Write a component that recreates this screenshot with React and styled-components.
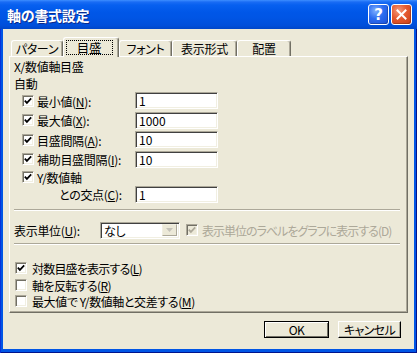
import React from 'react';
import styled, { createGlobalStyle } from 'styled-components';

const FONT = `"Noto Sans CJK JP", "Noto Sans", sans-serif`;

const GlobalStyle = createGlobalStyle`
  html, body { margin: 0; padding: 0; background: #ffffff; }
  body {
    font-family: ${FONT};
    font-size: 12px;
    color: #000;
    font-feature-settings: "palt";
    letter-spacing: -0.3px;
  }
  * { box-sizing: border-box; }
`;

const Window = styled.div`
  width: 417px;
  height: 353px;
  display: flex;
  flex-direction: column;
  background: #0055e5;
`;

const TitleBar = styled.div`
  height: 29px;
  flex: none;
  display: flex;
  align-items: center;
  padding: 0 5px 0 7px;
  background: linear-gradient(#3d8eff 0px, #1a6cf4 2px, #0760f0 5px, #0057e8 12px, #0055e5 60%, #004fda 88%, #0046c8 100%);
`;

const Title = styled.div`
  flex: 1;
  color: #fff;
  font-family: ${FONT};
  font-weight: bold;
  font-size: 14px;
  font-feature-settings: normal;
  letter-spacing: -0.3px;
  text-shadow: 1px 1px #0a2a8c;
  padding-top: 1px;
`;

const CaptionButtons = styled.div`
  display: flex;
  gap: 2px;
`;

const CaptionButton = styled.div`
  width: 21px;
  height: 21px;
  border: 1px solid #fff;
  border-radius: 3px;
  display: flex;
  align-items: center;
  justify-content: center;
  color: #fff;
  font-family: "DejaVu Sans", sans-serif;
  font-weight: bold;
  font-size: 15px;
  letter-spacing: 0;
  background: ${p => p.close
    ? 'radial-gradient(circle at 35% 30%, #f59a7c 0%, #e4592f 45%, #c73f17 100%)'
    : 'radial-gradient(circle at 35% 30%, #7fb0ff 0%, #2c6cf0 45%, #1a4fd6 100%)'};
  box-shadow: inset -1px -1px rgba(0,0,0,0.2);
`;

const Frame = styled.div`
  flex: 1;
  display: flex;
  padding: 0 3px 4px 3px;
  background: #0055e5;
  box-shadow: inset 1px 0 #0831d9, inset -1px 0 #00138c, inset 0 -1px #00138c;
`;

const Client = styled.div`
  flex: 1;
  background: #ece9d8;
  display: flex;
  flex-direction: column;
`;

const TabRow = styled.div`
  display: flex;
  align-items: flex-end;
  height: 19px;
  margin: 8px 0 0 8px;
`;

const Tab = styled.div`
  flex: none;
  width: ${p => p.w}px;
  height: ${p => (p.active ? 20 : 16)}px;
  margin-bottom: ${p => (p.active ? -1 : 0)}px;
  border-top: 1px solid #fff;
  border-left: 1px solid #fff;
  border-right: 1px solid #716f64;
  border-radius: 3px 3px 0 0;
  box-shadow: inset -1px 0 #aca899;
  background: #ece9d8;
  display: flex;
  align-items: center;
  justify-content: center;
  position: relative;
  z-index: ${p => (p.active ? 2 : 1)};
  font-size: 12px;
  line-height: 14px;
  padding-top: 1px;
`;

const FocusRing = styled.span`
  border: 1px dotted #000;
  width: 47px;
  height: 15px;
  display: flex;
  align-items: center;
  justify-content: center;
  margin-left: -4px;
  margin-top: -1px;
  font-size: 12.5px;
`;

const Panel = styled.div`
  width: 399px;
  height: 257px;
  margin-left: 6px;
  border-top: 1px solid #fff;
  border-left: 1px solid #fff;
  border-right: 1px solid #716f64;
  border-bottom: 1px solid #716f64;
  box-shadow: inset -1px -1px #aca899;
  display: flex;
  flex-direction: column;
`;

const Heading = styled.div`
  margin: 3px 0 0 4px;
  line-height: 14px;
  height: 14px;
`;

const SubHeading = styled.div`
  margin: 3px 0 0 4px;
  line-height: 14px;
  height: 14px;
`;

const Fields = styled.div`
  display: flex;
  flex-direction: column;
  padding-left: 12px;
`;

const FieldRow = styled.div`
  display: flex;
  align-items: center;
  height: ${p => p.h}px;
`;

const Label = styled.span`
  display: inline-block;
  flex: none;
  width: ${p => (p.w ? `${p.w}px` : 'auto')};
  margin-left: ${p => p.ml ?? 3}px;
  padding-top: 2px;
  line-height: 14px;
  white-space: nowrap;
  letter-spacing: ${p => (p.tight ? p.tight : -0.3)}px;
  color: ${p => (p.disabled ? '#aca899' : '#000')};
`;

const Box = styled.span`
  width: 12px;
  height: 12px;
  flex: none;
  display: inline-flex;
  align-items: center;
  justify-content: center;
  border-top: 1px solid #aca899;
  border-left: 1px solid #aca899;
  border-right: 1px solid #fff;
  border-bottom: 1px solid #fff;
  box-shadow: inset 1px 1px #716f64, inset -1px -1px #f1efe2;
  background: ${p => (p.disabled ? '#ece9d8' : '#fff')};
  margin-left: ${p => p.ml ?? 0}px;
`;

const TextField = styled.div`
  flex: none;
  width: 83px;
  height: 17px;
  border-top: 1px solid #aca899;
  border-left: 1px solid #aca899;
  border-right: 1px solid #fff;
  border-bottom: 1px solid #fff;
  box-shadow: inset 1px 1px #404040, inset -1px -1px #f1efe2;
  background: #fff;
  padding: 1px 0 0 3px;
  line-height: 14px;
  font-size: 12px;
  letter-spacing: 0;
`;

const Separator = styled.div`
  height: 2px;
  margin: ${p => p.mt}px 7px 0 4px;
  border-top: 1px solid #aca899;
  border-bottom: 1px solid #fff;
`;

const UnitRow = styled.div`
  display: flex;
  align-items: center;
  height: 18px;
  margin: 10px 0 0 4px;
`;

const Select = styled.div`
  flex: none;
  width: 80px;
  height: 17px;
  display: flex;
  align-items: center;
  border-top: 1px solid #aca899;
  border-left: 1px solid #aca899;
  border-right: 1px solid #fff;
  border-bottom: 1px solid #fff;
  box-shadow: inset 1px 1px #404040, inset -1px -1px #f1efe2;
  background: #fff;
  padding: 2px 2px 2px 3px;
`;

const SelectText = styled.span`
  flex: 1;
  line-height: 14px;
  padding-top: 1px;
`;

const DropButton = styled.span`
  width: 15px;
  height: 12px;
  display: flex;
  align-items: center;
  justify-content: center;
  background: #ece9d8;
  border-top: 1px solid #f1efe2;
  border-left: 1px solid #f1efe2;
  border-right: 1px solid #aca899;
  border-bottom: 1px solid #aca899;
`;

const Checks = styled.div`
  display: flex;
  flex-direction: column;
  margin: 15px 0 0 5px;
`;

const CheckRow = styled.div`
  display: flex;
  align-items: center;
  height: 16.5px;
`;

const ButtonRow = styled.div`
  display: flex;
  justify-content: flex-end;
  gap: 9px;
  margin-top: 8px;
  padding-right: 13px;
`;

const Button = styled.div`
  width: ${p => p.w}px;
  height: 17px;
  display: flex;
  align-items: center;
  justify-content: center;
  background: #ece9d8;
  border: 1px solid ${p => (p.primary ? '#000' : '#fff')};
  border-right-color: #000;
  border-bottom-color: #000;
  box-shadow: ${p => (p.primary
    ? 'inset 1px 1px #fff, inset -1px -1px #716f64'
    : 'inset -1px -1px #aca899')};
  font-size: 12px;
  line-height: 14px;
  padding-top: 1px;
  letter-spacing: -0.6px;
`;

const Check = ({ color = '#000' }) => (
  <svg width="8" height="8" viewBox="0 0 8 8">
    <polyline points="0.8,3.6 2.9,5.9 7.2,1.4" fill="none" stroke={color} strokeWidth="1.7" />
  </svg>
);

const CheckBox = ({ checked, disabled, ml }) => (
  <Box disabled={disabled} ml={ml}>
    {checked && <Check color={disabled ? '#aca899' : '#000'} />}
  </Box>
);

const tabs = [
  { label: 'パターン', w: 52 },
  { label: '目盛', w: 56, active: true },
  { label: 'フォント', w: 53 },
  { label: '表示形式', w: 65 },
  { label: '配置', w: 54 },
];

const fields = [
  { pre: '最小値(', key: 'N', post: '):', value: '1' },
  { pre: '最大値(', key: 'X', post: '):', value: '1000' },
  { pre: '目盛間隔(', key: 'A', post: '):', value: '10' },
  { pre: '補助目盛間隔(', key: 'I', post: '):', value: '10' },
];

const bottomChecks = [
  { pre: '対数目盛を表示する(', key: 'L', post: ')', checked: true, tight: -0.8 },
  { pre: '軸を反転する(', key: 'R', post: ')', checked: false, tight: -0.6 },
  { pre: '最大値で Y/数値軸と交差する(', key: 'M', post: ')', checked: false, tight: -0.4 },
];

export default function App() {
  return (
    <>
      <GlobalStyle />
      <Window>
        <TitleBar>
          <Title>軸の書式設定</Title>
          <CaptionButtons>
            <CaptionButton>?</CaptionButton>
            <CaptionButton close>
              <svg width="11" height="11" viewBox="0 0 11 11">
                <path d="M1.5 1.5 L9.5 9.5 M9.5 1.5 L1.5 9.5" stroke="#fff" strokeWidth="2" strokeLinecap="square" />
              </svg>
            </CaptionButton>
          </CaptionButtons>
        </TitleBar>
        <Frame>
          <Client>
            <TabRow>
              {tabs.map(t => (
                <Tab key={t.label} w={t.w} active={t.active}>
                  {t.active ? <FocusRing>{t.label}</FocusRing> : t.label}
                </Tab>
              ))}
            </TabRow>
            <Panel>
              <Heading>X/数値軸目盛</Heading>
              <SubHeading>自動</SubHeading>
              <Fields>
                {fields.map(f => (
                  <FieldRow h={19.5} key={f.key}>
                    <CheckBox checked />
                    <Label w={98}>{f.pre}<u>{f.key}</u>{f.post}</Label>
                    <TextField>{f.value}</TextField>
                  </FieldRow>
                ))}
                <FieldRow h={16}>
                  <CheckBox checked />
                  <Label>Y/数値軸</Label>
                </FieldRow>
                <FieldRow h={18}>
                  <Label ml={37} w={76}>との交点(<u>C</u>):</Label>
                  <TextField>1</TextField>
                </FieldRow>
              </Fields>
              <Separator mt={6} />
              <UnitRow>
                <Label ml={0} w={86}>表示単位(<u>U</u>):</Label>
                <Select>
                  <SelectText>なし</SelectText>
                  <DropButton>
                    <svg width="7" height="4" viewBox="0 0 7 4">
                      <path d="M0 0 L7 0 L3.5 4 Z" fill="#c4c2b8" />
                    </svg>
                  </DropButton>
                </Select>
                <CheckBox checked disabled ml={6} />
                <Label ml={4} tight={-1} disabled>表示単位のラベルをグラフに表示する(D)</Label>
              </UnitRow>
              <Separator mt={4} />
              <Checks>
                {bottomChecks.map(c => (
                  <CheckRow key={c.key}>
                    <CheckBox checked={c.checked} />
                    <Label ml={5} tight={c.tight}>{c.pre}<u>{c.key}</u>{c.post}</Label>
                  </CheckRow>
                ))}
              </Checks>
            </Panel>
            <ButtonRow>
              <Button w={65} primary>OK</Button>
              <Button w={63}>キャンセル</Button>
            </ButtonRow>
          </Client>
        </Frame>
      </Window>
    </>
  );
}
